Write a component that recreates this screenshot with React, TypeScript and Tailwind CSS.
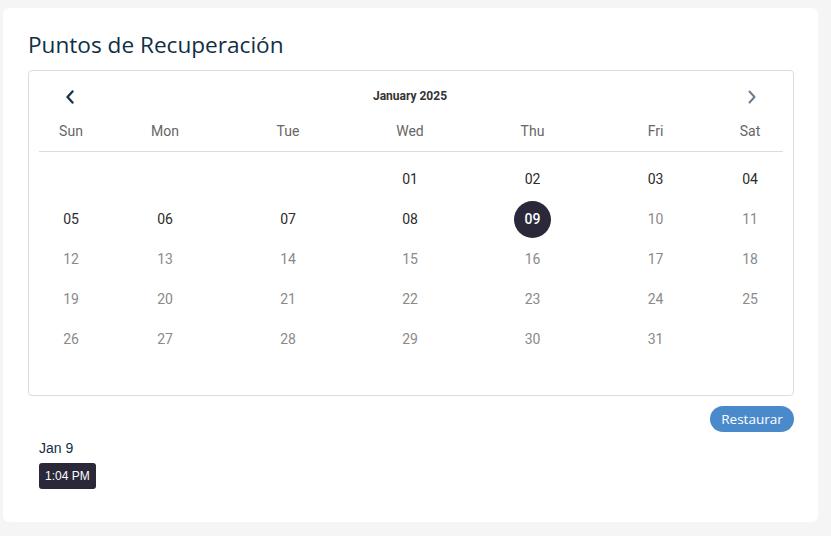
import React from "react";

const cols = "grid grid-cols-[64px_124px_122px_122px_123px_123px_66px]";

type Cell = { d: string; avail?: boolean; sel?: boolean } | null;

const rows: Cell[][] = [
  [null, null, null, { d: "01", avail: true }, { d: "02", avail: true }, { d: "03", avail: true }, { d: "04", avail: true }],
  [{ d: "05", avail: true }, { d: "06", avail: true }, { d: "07", avail: true }, { d: "08", avail: true }, { d: "09", avail: true, sel: true }, { d: "10" }, { d: "11" }],
  [{ d: "12" }, { d: "13" }, { d: "14" }, { d: "15" }, { d: "16" }, { d: "17" }, { d: "18" }],
  [{ d: "19" }, { d: "20" }, { d: "21" }, { d: "22" }, { d: "23" }, { d: "24" }, { d: "25" }],
  [{ d: "26" }, { d: "27" }, { d: "28" }, { d: "29" }, { d: "30" }, { d: "31" }, null],
];

const days = ["Sun", "Mon", "Tue", "Wed", "Thu", "Fri", "Sat"];

export default function App() {
  return (
    <div className="w-[831px] h-[536px] bg-[#f5f5f5] pt-[8px] pl-[3px]">
      <div className="w-[815px] h-[514px] bg-white rounded-[6px] px-[25px] pt-[21px]">
        <h1
          className="text-[22.6px] leading-[32px] text-[#0f2f47] mb-[9px]"
          style={{ fontFamily: '"Open Sans", sans-serif' }}
        >
          Puntos de Recuperación
        </h1>
        <div
          className="w-[766px] h-[326px] border border-[#dcdcdc] rounded-[4px] px-[10px] pt-[10px]"
          style={{ fontFamily: 'Roboto, sans-serif' }}
        >
          <div className={`${cols} h-[30px] items-center`}>
            <div className="flex justify-center">
              <svg width="10" height="14" viewBox="0 0 10 14" className="mr-[2px] mt-[1px]">
                <path d="M7.5 1.5 L2.5 7 L7.5 12.5" fill="none" stroke="#183550" strokeWidth="2.4" strokeLinecap="round" strokeLinejoin="round" />
              </svg>
            </div>
            <div className="col-span-5 text-center text-[12px] font-bold text-[#333]">January 2025</div>
            <div className="flex justify-center">
              <svg width="10" height="14" viewBox="0 0 10 14" className="ml-[4px] mt-[1px]">
                <path d="M2.5 1.5 L7.5 7 L2.5 12.5" fill="none" stroke="#6a7e90" strokeWidth="2" strokeLinecap="round" strokeLinejoin="round" />
              </svg>
            </div>
          </div>
          <div className={`${cols} h-[41px] pt-[1px] items-center border-b border-[#dcdcdc] text-[14px] text-[#666]`}>
            {days.map((d) => (
              <div key={d} className="text-center">{d}</div>
            ))}
          </div>
          <div className="pt-[7px]">
            {rows.map((r, i) => (
              <div key={i} className={`${cols} h-[40px] items-center text-[14px]`}>
                {r.map((c, j) => (
                  <div key={j} className="flex justify-center">
                    {c ? (
                      c.sel ? (
                        <div className="w-[37px] h-[37px] rounded-full bg-[#2a2839] text-white flex items-center justify-center font-medium">
                          {c.d}
                        </div>
                      ) : (
                        <span className={c.avail ? "text-[#2b2b2b]" : "text-[#8a8a8a]"}>{c.d}</span>
                      )
                    ) : null}
                  </div>
                ))}
              </div>
            ))}
          </div>
        </div>
        <div className="w-[766px] flex justify-end mt-[10px]">
          <button
            className="h-[26px] w-[84px] rounded-full bg-[#4a8acb] text-white text-[13.5px] leading-[26px]"
            style={{ fontFamily: '"Open Sans", sans-serif' }}
          >
            Restaurar
          </button>
        </div>
        <div className="pl-[11px] pt-[8px]" style={{ fontFamily: '"Liberation Sans", Arial, sans-serif' }}>
          <div className="text-[14px] leading-[16px] text-[#0f2f47]">Jan 9</div>
          <div className="mt-[7px] inline-flex h-[26px] px-[6px] items-center rounded-[3px] bg-[#2a2839] text-white text-[12px]">
            1:04 PM
          </div>
        </div>
      </div>
    </div>
  );
}
